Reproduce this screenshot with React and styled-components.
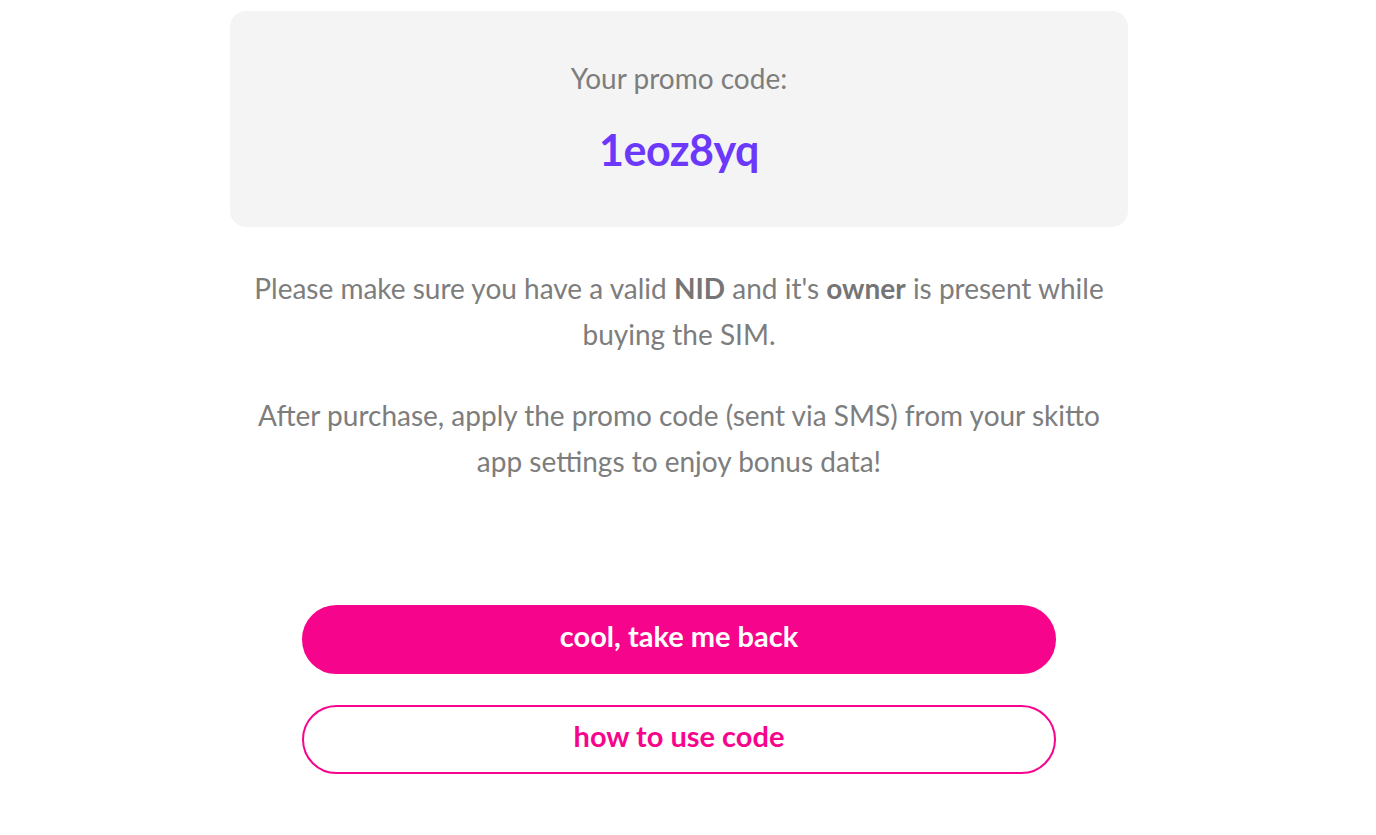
import styled, { createGlobalStyle } from "styled-components";

const GlobalStyle = createGlobalStyle`
  html, body {
    margin: 0;
    padding: 0;
    background: #ffffff;
  }
  body {
    font-family: Lato, "Liberation Sans", sans-serif;
  }
`;

const Page = styled.div`
  width: 1358px;
  display: flex;
  flex-direction: column;
  align-items: center;
  padding-top: 11px;
`;

const CodeCard = styled.div`
  width: 898px;
  height: 216px;
  box-sizing: border-box;
  background: #f4f4f4;
  border-radius: 16px;
  display: flex;
  flex-direction: column;
  align-items: center;
  padding-top: 51px;
`;

const CodeLabel = styled.p`
  margin: 0;
  font-size: 28px;
  line-height: 32px;
  color: #7d7d7d;
`;

const CodeValue = styled.p`
  margin: 28px 0 0;
  font-size: 43px;
  line-height: 56px;
  font-weight: 700;
  color: #6c39fb;
  letter-spacing: -0.5px;
`;

const Note = styled.p`
  width: 898px;
  margin: ${({ $first }) => ($first ? "38px" : "35px")} 0 0;
  padding: 0 20px;
  box-sizing: border-box;
  text-align: center;
  font-size: 28px;
  line-height: 46px;
  color: #7d7d7d;

  strong {
    font-weight: 700;
    color: #757575;
  }
`;

const Actions = styled.div`
  width: 754px;
  display: flex;
  flex-direction: column;
  gap: 31px;
  margin-top: 121px;
`;

const PillButton = styled.button`
  height: 69px;
  width: 100%;
  border-radius: 999px;
  border: 2px solid #f7048c;
  background: ${({ $outline }) => ($outline ? "#ffffff" : "#f7048c")};
  color: ${({ $outline }) => ($outline ? "#f7048c" : "#ffffff")};
  font-family: Lato, "Liberation Sans", sans-serif;
  font-size: 29px;
  font-weight: 700;
  cursor: pointer;
  padding: 0 0 8px;
`;

export default function App() {
  return (
    <>
      <GlobalStyle />
      <Page>
        <CodeCard>
          <CodeLabel>Your promo code:</CodeLabel>
          <CodeValue>1eoz8yq</CodeValue>
        </CodeCard>
        <Note $first>
          Please make sure you have a valid <strong>NID</strong> and it's{" "}
          <strong>owner</strong> is present while buying the SIM.
        </Note>
        <Note>
          After purchase, apply the promo code (sent via SMS) from your skitto
          app settings to enjoy bonus data!
        </Note>
        <Actions>
          <PillButton type="button">cool, take me back</PillButton>
          <PillButton type="button" $outline>
            how to use code
          </PillButton>
        </Actions>
      </Page>
    </>
  );
}
